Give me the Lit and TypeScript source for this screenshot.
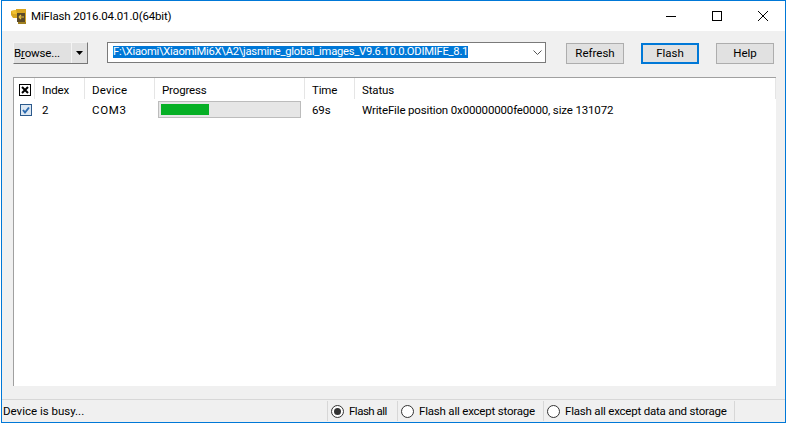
import { LitElement, html, css } from "lit";
import { customElement } from "lit/decorators.js";

@customElement("app-root")
export class AppRoot extends LitElement {
  static styles = css`
    :host { display: block; width: 787px; height: 424px; overflow: hidden; background: #fff;
      font-family: Roboto, "Open Sans", sans-serif; font-size: 11.5px; letter-spacing: -0.15px; color: #000; }
    * { box-sizing: border-box; }
    .win { width: 785px; height: 423px; border: 1px solid #0078d7; display: flex; flex-direction: column; margin-left: 1px; }
    .title { height: 30px; flex: none; background: #fff; display: flex; align-items: center; padding-left: 9px; }
    .app-icon { width: 16px; height: 15px; margin-right: 4px; flex: none; }
    .title-text { flex: 1; white-space: nowrap; padding-bottom: 1px; }
    .caps { display: flex; align-self: stretch; margin-right: -1px; }
    .cap { width: 46px; display: flex; align-items: center; justify-content: center; }
    .body { flex: 1; background: #f0f0f0; display: flex; flex-direction: column; min-height: 0; }
    .toolbar { height: 46px; flex: none; display: flex; align-items: flex-start; padding: 11px 0 0 11px; }
    .browse { width: 75px; height: 22px; display: flex; flex: none; background: #e1e1e1; border: 1px solid; border-color: #f4f4f4 #777 #777 #f4f4f4; }
    .browse-main { flex: 1; line-height: 20px; white-space: nowrap; border-right: 1px solid #f4f4f4; }
    .browse-main u { text-underline-offset: 1px; }
    .browse-drop { width: 15px; display: flex; align-items: center; justify-content: center; flex: none; }
    .combo { width: 439px; height: 21px; margin-left: 19px; background: #fff; border: 1px solid #7a7a7a; display: flex; align-items: center; padding-left: 5px; flex: none; }
    .sel { flex: 1; min-width: 0; white-space: nowrap; font-size: 11.2px; letter-spacing: -0.25px; display: flex; padding-bottom: 2px; }
    .sel span { background: #0078d7; color: #fff; line-height: 12px; height: 12px; }
    .chev { width: 16px; display: flex; justify-content: center; flex: none; }
    .btn { width: 58px; height: 21px; background: #e1e1e1; border: 1px solid #adadad; text-align: center; line-height: 19px; flex: none; margin-top: 1px; letter-spacing: 0; }
    .btn + .btn { margin-left: 17px; }
    .btn.first { margin-left: 20px; }
    .btn.def { border: 2px solid #0078d7; line-height: 17px; }
    .list { width: 763px; height: 309px; margin-left: 11px; flex: none; background: #fff; border-top: 1px solid #a0a0a0; border-left: 1px solid #a0a0a0; }
    .row { display: grid; grid-template-columns: 21px 50px 70px 150px 50px 1fr; align-items: center; }
    .head { height: 21px; }
    .head .c { height: 21px; line-height: 24px; padding-left: 7px; border-right: 1px solid #e5e5e5; white-space: nowrap; }
    .head .c:first-child { padding-left: 5px; display: flex; align-items: center; padding-top: 2px; }
    .head .c.dev { letter-spacing: 0.2px; }
    .body-row { height: 21px; }
    .body-row .c { padding-left: 7px; white-space: nowrap; }
    .body-row .c:first-child { padding-left: 6px; display: flex; align-items: center; }
    .body-row .c.pc { padding-left: 3px; }
    .body-row .c.dev { letter-spacing: 0.7px; }
    .bar { width: 143px; height: 17px; background: #e6e6e6; border: 1px solid #bcbcbc; padding: 2px; }
    .fill { height: 11px; background: #06b025; }
    .gap { height: 13px; flex: none; }
    .status { flex: 1; min-height: 0; border-top: 1px solid #d7d7d7; display: flex; align-items: stretch; padding-top: 1px; padding-bottom: 1px; letter-spacing: -0.2px; }
    .msg { width: 325px; flex: none; padding-left: 1px; line-height: 21px; white-space: nowrap; letter-spacing: 0; }
    .seg { display: flex; align-items: center; border-left: 1px solid #d7d7d7; padding-left: 3px; white-space: nowrap; flex: none; }
    .seg.a { width: 70px; letter-spacing: -0.5px; }
    .seg.b { width: 146px; }
    .seg.c { width: 192px; border-right: 1px solid #d7d7d7; }
    .radio { width: 13px; height: 13px; border-radius: 50%; border: 1px solid #333; background: #fff; margin-right: 5px; display: flex; align-items: center; justify-content: center; flex: none; }
    .radio i { width: 7px; height: 7px; border-radius: 50%; background: #333; display: block; }
  `;

  render() {
    return html`
      <div class="win">
        <div class="title">
          <svg class="app-icon" viewBox="0 0 16 15">
            <path d="M0 2 L5 1 L5 0 L15 0 L15 13 L6 13 L6 9 L2 9 L0 6 Z" fill="#d7a520"/>
            <path d="M0 2 L5 1 L6 5 L2 5 Z" fill="#f0c030"/>
            <rect x="6" y="4" width="8" height="9" fill="#5a4a28"/>
            <path d="M8 8 h5 M8 8 l2 -2 M8 8 l2 2" stroke="#e8c040" stroke-width="1.2" fill="none"/>
            <rect x="7" y="13" width="8" height="2" fill="#a08020"/>
          </svg>
          <div class="title-text">MiFlash 2016.04.01.0(64bit)</div>
          <div class="caps">
            <div class="cap"><svg width="10" height="10"><path d="M0 5.5H10" stroke="#000"/></svg></div>
            <div class="cap"><svg width="10" height="10"><rect x=".5" y=".5" width="9" height="9" fill="none" stroke="#000"/></svg></div>
            <div class="cap"><svg width="10" height="10"><path d="M0 0L10 10M10 0L0 10" stroke="#000"/></svg></div>
          </div>
        </div>
        <div class="body">
          <div class="toolbar">
            <div class="browse">
              <div class="browse-main">B<u>r</u>owse...</div>
              <div class="browse-drop"><svg width="7" height="4"><path d="M0 0H7L3.5 4Z" fill="#000"/></svg></div>
            </div>
            <div class="combo">
              <div class="sel"><span>F:\\Xiaomi\\XiaomiMi6X\\A2\\jasmine_global_images_V9.6.10.0.ODIMIFE_8.1</span></div>
              <div class="chev"><svg width="9" height="5"><path d="M.5 .5L4.5 4.5L8.5 .5" fill="none" stroke="#555"/></svg></div>
            </div>
            <div class="btn first">Refresh</div>
            <div class="btn def">Flash</div>
            <div class="btn">Help</div>
          </div>
          <div class="list">
            <div class="row head">
              <div class="c"><svg width="12" height="12"><rect x=".5" y=".5" width="11" height="11" fill="#fff" stroke="#000"/><path d="M3 3L9 9M9 3L3 9" stroke="#000" stroke-width="2"/></svg></div>
              <div class="c">Index</div>
              <div class="c dev">Device</div>
              <div class="c">Progress</div>
              <div class="c">Time</div>
              <div class="c">Status</div>
            </div>
            <div class="row body-row">
              <div class="c"><svg width="12" height="12"><rect x=".5" y=".5" width="11" height="11" fill="#dde8f3" stroke="#2c5a8c"/><path d="M3 6L5 8.5L9 3.5" fill="none" stroke="#2c6bb0" stroke-width="2"/></svg></div>
              <div class="c">2</div>
              <div class="c dev">COM3</div>
              <div class="c pc"><div class="bar"><div class="fill" style="width:48px"></div></div></div>
              <div class="c">69s</div>
              <div class="c">WriteFile position 0x00000000fe0000, size 131072</div>
            </div>
          </div>
          <div class="gap"></div>
          <div class="status">
            <div class="msg">Device is busy...</div>
            <div class="seg a"><span class="radio"><i></i></span>Flash all</div>
            <div class="seg b"><span class="radio"></span>Flash all except storage</div>
            <div class="seg c"><span class="radio"></span>Flash all except data and storage</div>
          </div>
        </div>
      </div>
    `;
  }
}
